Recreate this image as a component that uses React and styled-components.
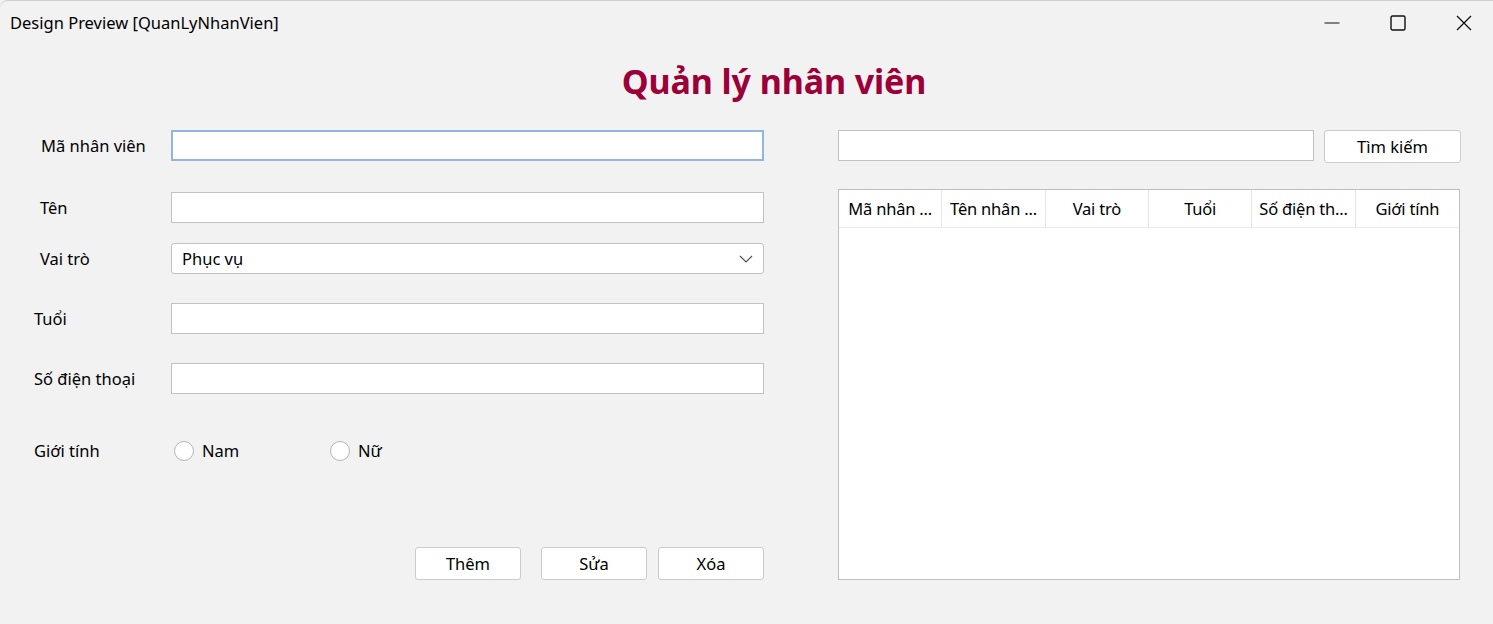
import styled, { createGlobalStyle } from "styled-components";

const GlobalStyle = createGlobalStyle`
  html, body {
    margin: 0;
    padding: 0;
    background: #f2f2f2;
  }
  body {
    font-family: "Noto Sans", "Open Sans", sans-serif;
    color: #000;
  }
`;

const Window = styled.div`
  width: 1493px;
  height: 624px;
  box-sizing: border-box;
  border-top: 1px solid #cfcfcf;
  border-top-left-radius: 8px;
  background: #f2f2f2;
  overflow: hidden;
`;

const TitleBar = styled.div`
  height: 45px;
  display: flex;
  align-items: center;
  justify-content: space-between;
  padding-left: 10px;
`;

const TitleText = styled.span`
  font-size: 16.5px;
  margin-top: -2px;
`;

const Controls = styled.div`
  display: flex;
  align-items: center;
  height: 100%;
  padding-right: 0;
  margin-right: -4px;
`;

const ControlButton = styled.div`
  width: 66px;
  height: 100%;
  display: flex;
  align-items: center;
  justify-content: center;
  margin-top: -2px;
`;

const Heading = styled.h1`
  margin: 12px 0 0;
  text-align: center;
  font-size: 34px;
  font-weight: 700;
  color: #9c0039;
  line-height: 46px;
  padding-left: 55px;
  letter-spacing: -0.1px;
`;

const Body = styled.div`
  display: flex;
  margin-top: 26px;
`;

const FormColumn = styled.div`
  width: 764px;
  display: flex;
  flex-direction: column;
`;

const Row = styled.div`
  display: flex;
  align-items: center;
  height: 31px;
  margin-top: ${(p) => p.$gap || 0}px;
`;

const Label = styled.label`
  width: ${(p) => 171 - p.$indent}px;
  padding-left: ${(p) => p.$indent}px;
  font-size: 16.5px;
  white-space: nowrap;
`;

const Input = styled.div`
  width: 593px;
  height: 31px;
  box-sizing: border-box;
  background: #fff;
  border: ${(p) => (p.$focus ? "2px solid #93b6de" : "1.5px solid #c2c2c2")};
`;

const Combo = styled.div`
  width: 593px;
  height: 31px;
  box-sizing: border-box;
  background: #fff;
  border: 1.5px solid #c2c2c2;
  border-radius: 3px;
  display: flex;
  align-items: center;
  justify-content: space-between;
  padding: 0 10px 0 10px;
  font-size: 16.5px;
`;

const RadioGroup = styled.div`
  display: flex;
  align-items: center;
`;

const RadioOption = styled.div`
  display: flex;
  align-items: center;
  gap: 8px;
  width: ${(p) => p.$width}px;
  padding-left: 3px;
  font-size: 16.5px;
`;

const RadioCircle = styled.span`
  width: 20px;
  height: 20px;
  box-sizing: border-box;
  border-radius: 50%;
  border: 1.5px solid #b4b4b4;
  background: #fff;
`;

const ButtonRow = styled.div`
  display: flex;
  justify-content: flex-end;
  margin-top: 81px;
`;

const Button = styled.div`
  width: 106px;
  height: 33px;
  box-sizing: border-box;
  background: #fff;
  border: 1.5px solid #cbcbcb;
  border-radius: 3px;
  display: flex;
  align-items: center;
  justify-content: center;
  font-size: 16.5px;
  margin-left: ${(p) => p.$ml || 0}px;
`;

const SideColumn = styled.div`
  margin-left: 74px;
  width: 623px;
  display: flex;
  flex-direction: column;
`;

const SearchRow = styled.div`
  display: flex;
  align-items: flex-start;
`;

const SearchInput = styled.div`
  width: 476px;
  height: 31px;
  box-sizing: border-box;
  background: #fff;
  border: 1.5px solid #c2c2c2;
`;

const SearchButton = styled(Button)`
  width: 137px;
  margin-left: 10px;
`;

const Table = styled.div`
  margin-top: 26px;
  height: 391px;
  width: 622px;
  box-sizing: border-box;
  background: #fff;
  border: 1.5px solid #bdbdbd;
`;

const HeaderRow = styled.div`
  display: grid;
  grid-template-columns: repeat(6, 1fr);
  height: 37px;
  border-bottom: 1.5px solid #ececec;
`;

const HeaderCell = styled.div`
  display: flex;
  align-items: center;
  justify-content: center;
  font-size: 16.5px;
  letter-spacing: -0.2px;
  border-right: 1px solid #e6e6e6;
  white-space: nowrap;
  overflow: hidden;
  &:last-child {
    border-right: none;
  }
`;

const fields = [
  { label: "Mã nhân viên", indent: 41, gap: 0, focus: true },
  { label: "Tên", indent: 40, gap: 31 },
  { label: "Vai trò", indent: 40, gap: 20, combo: "Phục vụ" },
  { label: "Tuổi", indent: 34, gap: 29 },
  { label: "Số điện thoại", indent: 34, gap: 29 },
];

const columns = ["Mã nhân ...", "Tên nhân ...", "Vai trò", "Tuổi", "Số điện th...", "Giới tính"];

export default function App() {
  return (
    <>
      <GlobalStyle />
      <Window>
        <TitleBar>
          <TitleText>Design Preview [QuanLyNhanVien]</TitleText>
          <Controls>
            <ControlButton>
              <svg width="16" height="16" viewBox="0 0 16 16">
                <line x1="0.5" y1="8" x2="15.5" y2="8" stroke="#111" strokeWidth="1.2" />
              </svg>
            </ControlButton>
            <ControlButton>
              <svg width="16" height="16" viewBox="0 0 16 16">
                <rect x="1" y="1" width="14" height="14" rx="1.5" fill="none" stroke="#111" strokeWidth="1.4" />
              </svg>
            </ControlButton>
            <ControlButton>
              <svg width="16" height="16" viewBox="0 0 16 16">
                <path d="M1 1 L15 15 M15 1 L1 15" stroke="#111" strokeWidth="1.3" />
              </svg>
            </ControlButton>
          </Controls>
        </TitleBar>
        <Heading>Quản lý nhân viên</Heading>
        <Body>
          <FormColumn>
            {fields.map((f) => (
              <Row key={f.label} $gap={f.gap}>
                <Label $indent={f.indent}>{f.label}</Label>
                {f.combo ? (
                  <Combo>
                    <span>{f.combo}</span>
                    <svg width="14" height="8" viewBox="0 0 14 8">
                      <path d="M1 1 L7 7 L13 1" fill="none" stroke="#555" strokeWidth="1.2" />
                    </svg>
                  </Combo>
                ) : (
                  <Input $focus={f.focus} />
                )}
              </Row>
            ))}
            <Row $gap={41}>
              <Label $indent={34}>Giới tính</Label>
              <RadioGroup>
                <RadioOption $width={153}>
                  <RadioCircle />
                  <span>Nam</span>
                </RadioOption>
                <RadioOption $width={80}>
                  <RadioCircle />
                  <span>Nữ</span>
                </RadioOption>
              </RadioGroup>
            </Row>
            <ButtonRow>
              <Button>Thêm</Button>
              <Button $ml={20}>Sửa</Button>
              <Button $ml={11}>Xóa</Button>
            </ButtonRow>
          </FormColumn>
          <SideColumn>
            <SearchRow>
              <SearchInput />
              <SearchButton>Tìm kiếm</SearchButton>
            </SearchRow>
            <Table>
              <HeaderRow>
                {columns.map((c) => (
                  <HeaderCell key={c}>{c}</HeaderCell>
                ))}
              </HeaderRow>
            </Table>
          </SideColumn>
        </Body>
      </Window>
    </>
  );
}
